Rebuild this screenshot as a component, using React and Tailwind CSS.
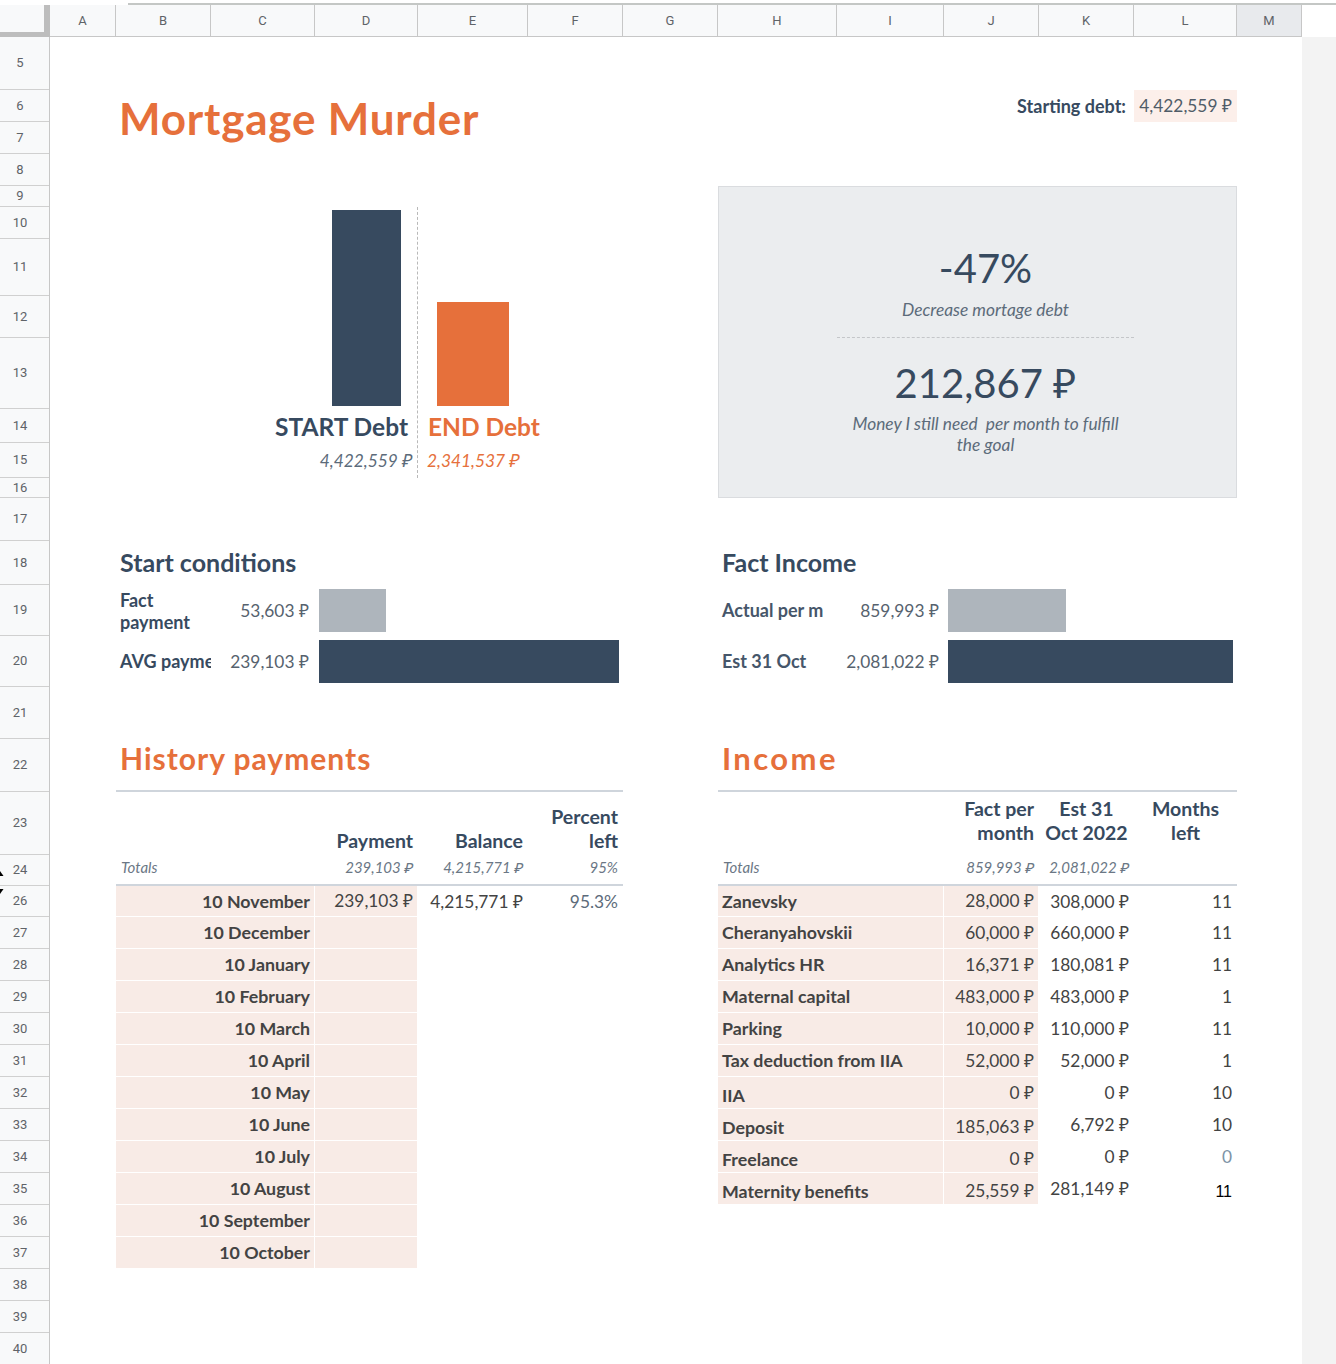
import React from 'react';

const colHeads = [
  ['A', 'w-[66px]'], ['B', 'w-[95px]'], ['C', 'w-[104px]'], ['D', 'w-[103px]'], ['E', 'w-[110px]'],
  ['F', 'w-[95px]'], ['G', 'w-[95px]'], ['H', 'w-[119px]'], ['I', 'w-[107px]'], ['J', 'w-[95px]'],
  ['K', 'w-[95px]'], ['L', 'w-[103px]'], ['M', 'w-[65px]'],
];

const rowHeads = [
  [5, 'h-[53px]'], [6, 'h-[32px]'], [7, 'h-[32px]'], [8, 'h-[32px]'], [9, 'h-[21px]'],
  [10, 'h-[32px]'], [11, 'h-[57px]'], [12, 'h-[42px]'], [13, 'h-[71px]'], [14, 'h-[34px]'],
  [15, 'h-[35px]'], [16, 'h-[20px]'], [17, 'h-[43px]'], [18, 'h-[44px]'], [19, 'h-[51px]'],
  [20, 'h-[51px]'], [21, 'h-[52px]'], [22, 'h-[53px]'], [23, 'h-[63px]'], [24, 'h-[31px]'],
  [26, 'h-[31px]'], [27, 'h-[32px]'], [28, 'h-[32px]'], [29, 'h-[32px]'], [30, 'h-[32px]'],
  [31, 'h-[32px]'], [32, 'h-[32px]'], [33, 'h-[32px]'], [34, 'h-[32px]'], [35, 'h-[32px]'],
  [36, 'h-[32px]'], [37, 'h-[32px]'], [38, 'h-[32px]'], [39, 'h-[32px]'], [40, 'h-[32px]'],
];

const history = [
  '10 November', '10 December', '10 January', '10 February', '10 March', '10 April',
  '10 May', '10 June', '10 July', '10 August', '10 September', '10 October',
];

// a few rows in the sheet sit a bit lower in their cells
const income = [
  { name: 'Zanevsky', fact: '28,000 ₽', est: '308,000 ₽', left: '11' },
  { name: 'Cheranyahovskii', fact: '60,000 ₽', est: '660,000 ₽', left: '11' },
  { name: 'Analytics HR', fact: '16,371 ₽', est: '180,081 ₽', left: '11' },
  { name: 'Maternal capital', fact: '483,000 ₽', est: '483,000 ₽', left: '1' },
  { name: 'Parking', fact: '10,000 ₽', est: '110,000 ₽', left: '11' },
  { name: 'Tax deduction from IIA', fact: '52,000 ₽', est: '52,000 ₽', left: '1' },
  { name: 'IIA', fact: '0 ₽', est: '0 ₽', left: '10', nameCls: 'pt-[5px]' },
  { name: 'Deposit', fact: '185,063 ₽', est: '6,792 ₽', left: '10', nameCls: 'pt-[5px]', factCls: 'pt-[5px]' },
  { name: 'Freelance', fact: '0 ₽', est: '0 ₽', left: '0', nameCls: 'pt-[5px]', factCls: 'pt-[5px]', leftCls: 'text-[#7d93a6]' },
  { name: 'Maternity benefits', fact: '25,559 ₽', est: '281,149 ₽', left: '11', nameCls: 'pt-[5px]', factCls: 'pt-[5px]', leftCls: "pt-[5px] font-['Liberation_Sans',sans-serif] text-[16px] text-black" },
];

function TopStrip() {
  return (
    <div className="flex h-[5px]">
      <div className="w-[128px]" />
      <div className="flex-1 border-b-2 border-[#c4c7c5]" />
    </div>
  );
}

function ColumnHeaders() {
  return (
    <div className="flex h-[32px] font-['Roboto',sans-serif] text-[13px] text-[#5f6368]">
      <div className="w-[50px] h-full bg-[#f8f9fa] border-r-[6px] border-b-[5px] border-[#bdbdbd]" />
      {colHeads.map(([name, w]) => (
        <div
          key={name}
          className={`${w} h-full flex items-center justify-center border-r border-b border-[#c7c7c7] ${name === 'M' ? 'bg-[#e8eaed]' : 'bg-[#f8f9fa]'}`}
        >
          {name}
        </div>
      ))}
      <div className="flex-1" />
    </div>
  );
}

function RowHeaders() {
  return (
    <div className="w-[50px] flex flex-col bg-[#f8f9fa] border-r border-[#c7c7c7] font-['Roboto',sans-serif] text-[13px] text-[#5f6368]">
      {rowHeads.map(([n, h]) => (
        <div key={n} className={`${h} flex items-center border-b border-[#d0d0d0]`}>
          <div className="w-[6px] h-full flex flex-col">
            {n === 24 && (
              <svg className="mt-auto mb-[9px]" width="4" height="5" viewBox="0 0 4 5">
                <path d="M0 0 L3.5 5 L0 5 Z" fill="#000" />
              </svg>
            )}
            {n === 26 && (
              <svg className="mt-[3px]" width="4" height="5" viewBox="0 0 4 5">
                <path d="M0 0 L3.5 0 L0 5 Z" fill="#000" />
              </svg>
            )}
          </div>
          <span className="flex-1 text-center">{n}</span>
          <div className="w-[15px]" />
        </div>
      ))}
    </div>
  );
}

function Bar({ value, max, color }) {
  return <div className={`h-full ${color}`} style={{ width: `${(value / max) * 100}%` }} />;
}

function Sheet() {
  return (
    <div className="w-[1252px] grid grid-cols-[66px_95px_104px_103px_110px_95px_95px_119px_107px_95px_95px_103px_65px] grid-rows-[53px_32px_32px_32px_21px_32px_57px_42px_71px_34px_35px_20px_43px_44px_51px_51px_52px_53px_63px_31px_31px_repeat(14,32px)] text-[17.33px] text-[#374a5f]">
      {/* title */}
      <div className="col-[2/7] row-[2/4] pt-[2px] pl-[3px] text-[44px] leading-[52px] tracking-[0.8px] font-bold text-[#e6703b] whitespace-nowrap">
        Mortgage Murder
      </div>
      <div className="col-[10/12] row-[2/3] flex items-center justify-end pr-[8px] text-[18px] font-bold whitespace-nowrap">
        Starting debt:
      </div>
      <div className="col-[12/13] row-[2/3] flex items-center justify-end pr-[5px] bg-[#fcefea] text-[#505c68]">
        4,422,559 ₽
      </div>

      {/* debt chart */}
      <div className="col-[4/5] row-[6/12] border-r border-dashed border-[#b9b9b9]" />
      <div className="col-[4/5] row-[6/10] px-[17px] py-[3px]">
        <div className="h-full bg-[#374a5f]" />
      </div>
      <div className="col-[5/6] row-[6/10] flex items-end px-[19px] pb-[3px]">
        <div className="w-full h-[104px] bg-[#e6703b]" />
      </div>
      <div className="col-[4/5] row-[10/11] flex items-center justify-end pr-[10px] pt-[3px] text-[24.5px] font-bold whitespace-nowrap">
        START Debt
      </div>
      <div className="col-[5/6] row-[10/11] flex items-center pl-[10px] pt-[3px] text-[24.5px] font-bold text-[#e6703b] whitespace-nowrap">
        END Debt
      </div>
      <div className="col-[4/5] row-[11/12] flex items-center justify-end pr-[6px] italic text-[#5c6b7a] whitespace-nowrap">
        4,422,559 ₽
      </div>
      <div className="col-[5/6] row-[11/12] flex items-center pl-[9px] italic text-[#e6703b] whitespace-nowrap">
        2,341,537 ₽
      </div>

      {/* summary box */}
      <div className="col-[8/13] row-[5/13] bg-[#ebedef] border border-[#dadcdf]" />
      <div className="col-[9/12] row-[7/8] flex items-center justify-center text-[40px] leading-[48px]">
        -47%
      </div>
      <div className="col-[9/12] row-[8/9] flex justify-center pt-[3px] italic leading-[21px] text-[#5c6b7a] border-b border-dashed border-[#c4c6c9]">
        Decrease mortage debt
      </div>
      <div className="col-[9/12] row-[9/10] flex items-end justify-center pb-[3px] text-[40px] leading-[46px]">
        212,867 ₽
      </div>
      <div className="col-[9/12] row-[10/12] px-[10px] pt-[4px] text-center italic leading-[21px] text-[#5c6b7a]">
        Money I still need{'\u00a0'} per month to fulfill the goal
      </div>

      {/* start conditions */}
      <div className="col-[2/5] row-[14/15] flex items-center pl-[4px] text-[25px] font-bold whitespace-nowrap">
        Start conditions
      </div>
      <div className="col-[2/3] row-[15/16] flex items-center pl-[4px] text-[18px] font-bold leading-[22px]">
        <span>Fact<br />payment</span>
      </div>
      <div className="col-[3/4] row-[15/16] flex items-center justify-end pr-[6px] text-[#56626e]">53,603 ₽</div>
      <div className="col-[4/7] row-[15/16] p-[4px]">
        <Bar value={53603} max={239103} color="bg-[#aeb5bc]" />
      </div>
      <div className="col-[2/3] row-[16/17] flex items-center pl-[4px] text-[18px] font-bold whitespace-nowrap overflow-hidden">
        AVG payment
      </div>
      <div className="col-[3/4] row-[16/17] flex items-center justify-end pr-[6px] text-[#56626e]">239,103 ₽</div>
      <div className="col-[4/7] row-[16/17] p-[4px]">
        <Bar value={239103} max={239103} color="bg-[#374a5f]" />
      </div>

      {/* fact income */}
      <div className="col-[8/11] row-[14/15] flex items-center pl-[4px] text-[25px] font-bold whitespace-nowrap">
        Fact Income
      </div>
      <div className="col-[8/9] row-[15/16] flex items-center pl-[4px] text-[18px] font-bold text-[#46566a] whitespace-nowrap overflow-hidden">
        Actual per m
      </div>
      <div className="col-[9/10] row-[15/16] flex items-center justify-end pr-[5px] text-[#56626e]">859,993 ₽</div>
      <div className="col-[10/13] row-[15/16] p-[4px]">
        <Bar value={859993} max={2081022} color="bg-[#aeb5bc]" />
      </div>
      <div className="col-[8/9] row-[16/17] flex items-center pl-[4px] text-[18px] font-bold text-[#46566a] whitespace-nowrap">
        Est 31 Oct
      </div>
      <div className="col-[9/10] row-[16/17] flex items-center justify-end pr-[5px] text-[#56626e]">2,081,022 ₽</div>
      <div className="col-[10/13] row-[16/17] p-[4px]">
        <Bar value={2081022} max={2081022} color="bg-[#374a5f]" />
      </div>

      {/* history payments */}
      <div className="col-[2/7] row-[18/19] flex items-end pl-[4px] pb-[9px] text-[30px] tracking-[1px] font-bold text-[#e6703b] border-b-2 border-[#cfd5dc] whitespace-nowrap">
        History payments
      </div>
      <div className="col-[4/5] row-[19/20] flex items-end justify-end pr-[5px] pb-[2px] text-[19.5px] leading-[24px] font-bold">
        Payment
      </div>
      <div className="col-[5/6] row-[19/20] flex items-end justify-end pr-[5px] pb-[2px] text-[19.5px] leading-[24px] font-bold">
        Balance
      </div>
      <div className="col-[6/7] row-[19/20] flex items-end justify-end pr-[5px] pb-[2px] text-right text-[19.5px] leading-[24px] font-bold">
        <span>Percent<br />left</span>
      </div>
      <div className="col-[2/7] row-[20/21] border-b-2 border-[#cfd5dc]" />
      <div className="col-[2/3] row-[20/21] flex items-end pl-[5px] pb-[10px] italic text-[15px] leading-[18px] text-[#6b7785]">Totals</div>
      <div className="col-[4/5] row-[20/21] flex items-end justify-end pr-[5px] pb-[10px] italic text-[15px] leading-[18px] text-[#6b7785]">239,103 ₽</div>
      <div className="col-[5/6] row-[20/21] flex items-end justify-end pr-[5px] pb-[10px] italic text-[15px] leading-[18px] text-[#6b7785]">4,215,771 ₽</div>
      <div className="col-[6/7] row-[20/21] flex items-end justify-end pr-[5px] pb-[10px] italic text-[15px] leading-[18px] text-[#6b7785]">95%</div>
      <div className="col-[2/7] row-[21/33] flex flex-col text-[#434343]">
        {history.map((m, i) => (
          <div key={m} className={`flex ${i === 0 ? 'h-[31px]' : 'h-[32px]'}`}>
            <div className="w-[199px] flex items-center justify-end pr-[4px] bg-[#f8ebe6] border-r border-b border-white text-[17.8px] font-bold">
              {m}
            </div>
            <div className="w-[103px] flex items-center justify-end pr-[4px] bg-[#f8ebe6] border-r border-b border-white">
              {i === 0 ? '239,103 ₽' : ''}
            </div>
            <div className="w-[110px] flex items-center justify-end pr-[5px]">
              {i === 0 ? '4,215,771 ₽' : ''}
            </div>
            <div className="w-[95px] flex items-center justify-end pr-[5px] text-[#5c6b7a]">
              {i === 0 ? '95.3%' : ''}
            </div>
          </div>
        ))}
      </div>

      {/* income */}
      <div className="col-[8/13] row-[18/19] flex items-end pl-[4px] pb-[9px] text-[31px] tracking-[2.4px] font-bold text-[#e6703b] border-b-2 border-[#cfd5dc]">
        Income
      </div>
      <div className="col-[10/11] row-[19/20] flex items-end justify-end pr-[5px] pb-[10px] text-right text-[19.5px] leading-[24px] font-bold">
        <span>Fact per<br />month</span>
      </div>
      <div className="col-[11/12] row-[19/20] flex items-end justify-center pb-[10px] text-center text-[19.5px] leading-[24px] font-bold">
        <span>Est 31<br />Oct 2022</span>
      </div>
      <div className="col-[12/13] row-[19/20] flex items-end justify-center pb-[10px] text-center text-[19.5px] leading-[24px] font-bold">
        <span>Months<br />left</span>
      </div>
      <div className="col-[8/13] row-[20/21] border-b-2 border-[#cfd5dc]" />
      <div className="col-[8/9] row-[20/21] flex items-end pl-[5px] pb-[10px] italic text-[15px] leading-[18px] text-[#6b7785]">Totals</div>
      <div className="col-[10/11] row-[20/21] flex items-end justify-end pr-[5px] pb-[10px] italic text-[15px] leading-[18px] text-[#6b7785]">859,993 ₽</div>
      <div className="col-[11/12] row-[20/21] flex items-end justify-end pr-[5px] pb-[10px] italic text-[15px] leading-[18px] text-[#6b7785]">2,081,022 ₽</div>
      <div className="col-[8/13] row-[21/31] flex flex-col text-[#434343]">
        {income.map((r, i) => (
          <div key={r.name} className={`flex ${i === 0 ? 'h-[31px]' : 'h-[32px]'}`}>
            <div className={`w-[226px] flex items-center pl-[4px] bg-[#f8ebe6] border-r border-b border-white text-[17.8px] font-bold whitespace-nowrap ${r.nameCls || ''}`}>
              {r.name}
            </div>
            <div className={`w-[95px] flex items-center justify-end pr-[4px] bg-[#f8ebe6] border-r border-b border-white whitespace-nowrap ${r.factCls || ''}`}>
              {r.fact}
            </div>
            <div className="w-[95px] flex items-center justify-end pr-[5px] whitespace-nowrap">
              {r.est}
            </div>
            <div className={`w-[103px] flex items-center justify-end pr-[5px] ${r.leftCls || ''}`}>
              {r.left}
            </div>
          </div>
        ))}
      </div>
    </div>
  );
}

export default function App() {
  return (
    <div className="w-[1336px] h-[1364px] overflow-hidden bg-white font-['Lato','Noto_Sans',sans-serif]">
      <TopStrip />
      <ColumnHeaders />
      <div className="flex">
        <RowHeaders />
        <Sheet />
        <div className="flex-1 bg-[#f3f3f3]" />
      </div>
    </div>
  );
}
